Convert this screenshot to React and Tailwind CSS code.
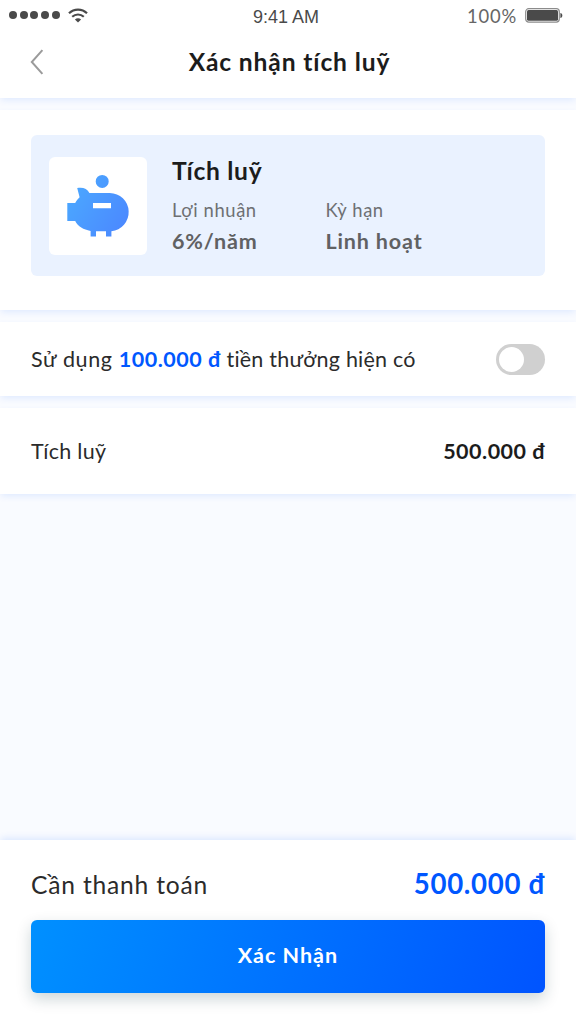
import { useState } from "react";

const details = [
  { label: "Lợi nhuận", value: "6%/năm" },
  { label: "Kỳ hạn", value: "Linh hoạt" },
];

function StatusBar() {
  return (
    <div className="flex h-8 items-center justify-between pl-[9px] pr-[13px] text-[#4a4a4a]">
      <div className="flex w-[180px] items-center gap-2 pb-0.5">
        <div className="flex gap-[2.7px]">
          {[0, 1, 2, 3, 4].map((dot) => (
            <span key={dot} className="size-2 rounded-full bg-[#4a4a4a]" />
          ))}
        </div>
        <svg width="20" height="16" viewBox="0 0 20 16" fill="none">
          <path
            d="M1 6.2C6 1.3 14 1.3 19 6.2"
            stroke="currentColor"
            strokeWidth="2.2"
          />
          <path
            d="M4.2 9.8C7.5 6.7 12.5 6.7 15.8 9.8"
            stroke="currentColor"
            strokeWidth="2.2"
          />
          <path
            d="M6.9 12.6C8.7 10.9 11.3 10.9 13.1 12.6L10 15.6Z"
            fill="currentColor"
          />
        </svg>
      </div>
      <span className="pt-0.5 font-['Liberation_Sans',sans-serif] text-[18px]">
        9:41 AM
      </span>
      <div className="flex w-[180px] items-center justify-end gap-2">
        <span className="pt-0.5 text-[18.4px] tracking-[0.8px] text-[#666]">
          100%
        </span>
        <svg width="38" height="15" viewBox="0 0 38 15">
          <rect
            x="0.7"
            y="0.7"
            width="33.6"
            height="13.4"
            rx="3"
            fill="#fff"
            stroke="#8c8c8c"
            strokeWidth="1.2"
          />
          <rect x="2" y="2" width="31" height="10.8" rx="1.5" fill="#4a4a4a" />
          <path d="M35.4 5C38 5.4 38 9.6 35.4 10Z" fill="#4a4a4a" />
        </svg>
      </div>
    </div>
  );
}

function PiggyBank() {
  return (
    <svg width="62" height="62" viewBox="0 0 62 62" overflow="visible">
      <defs>
        <linearGradient id="piggy" x1="0" y1="0.2" x2="1" y2="0.8">
          <stop offset="0" stopColor="#4ba9ff" />
          <stop offset="1" stopColor="#4b88ff" />
        </linearGradient>
      </defs>
      <path
        fill="url(#piggy)"
        fillRule="evenodd"
        d="M35.2 -.1a6.5 6.5 0 0 1 0 13a6.5 6.5 0 0 1 0 -13ZM10.2 13.1C15.5 11.9 20.4 13.6 22.4 17.9H42.8A19.2 19.2 0 0 1 44.4 56.2V61.6H39V56.2H29V61.6H23.6V56C16.4 54.8 11 51.5 8.2 46.1H.3V28H8.2C9.5 25.5 11 23.7 12.6 22.3ZM26 28V33.3H44V28Z"
      />
    </svg>
  );
}

function Switch({ checked, onChange }) {
  return (
    <button
      role="switch"
      aria-checked={checked}
      onClick={() => onChange(!checked)}
      className={`flex h-[31px] w-[49px] items-center rounded-full px-[3px] ${
        checked ? "justify-end bg-[#0057ff]" : "justify-start bg-[#d0d0d0]"
      }`}
    >
      <span className="size-[25px] rounded-full bg-white" />
    </button>
  );
}

export default function App() {
  const [useBonus, setUseBonus] = useState(false);

  return (
    <div className="flex h-[1024px] w-[576px] flex-col overflow-hidden bg-[#f9fbff] font-['Lato','Noto_Sans',sans-serif] text-[#2b2b2b]">
      <header className="relative h-[98px] shrink-0 bg-white shadow-[0_3px_7px_-1px_rgba(0,87,255,0.11)]">
        <StatusBar />
        <div className="grid h-[60px] grid-cols-[1fr_auto_1fr] items-center pl-[30px] pr-[27px]">
          <button>
            <svg
              width="14"
              height="26"
              viewBox="0 0 14 26"
              fill="none"
              stroke="#9b9b9b"
              strokeWidth="2"
            >
              <path d="M12.4 1.2L1.8 13L12.4 24.8" />
            </svg>
          </button>
          <h1 className="text-[24.6px] font-bold tracking-[0.87px] text-[#1c1c1c]">
            Xác nhận tích luỹ
          </h1>
        </div>
      </header>

      <section className="relative mt-3 h-[200px] shrink-0 bg-white px-[31px] pt-[25px] shadow-[0_3px_7px_-1px_rgba(0,87,255,0.11)]">
        <div className="flex h-[141px] items-center rounded-md bg-[#eaf2ff] px-[18px]">
          <div className="flex size-[98px] items-center justify-center rounded-md bg-white">
            <PiggyBank />
          </div>
          <div className="ml-[25px]">
            <h2 className="text-[24.6px] leading-[34px] font-bold tracking-[0.7px] text-[#1c1c1c]">
              Tích luỹ
            </h2>
            <div className="mt-[7px] flex">
              {details.map((item) => (
                <div key={item.label} className="w-[153.5px]">
                  <p className="text-[18.4px] leading-[30px] tracking-[0.6px] text-[#6e7073]">
                    {item.label}
                  </p>
                  <p className="text-[21.5px] leading-8 font-bold tracking-[0.85px] text-[#606163]">
                    {item.value}
                  </p>
                </div>
              ))}
            </div>
          </div>
        </div>
      </section>

      <section className="relative mt-3 flex h-[74px] shrink-0 items-center justify-between bg-white px-[31px] text-[21.5px] shadow-[0_3px_7px_-1px_rgba(0,87,255,0.11)]">
        <p className="tracking-[0.22px]">
          <span className="tracking-[0.65px]">Sử dụng </span>
          <span className="font-bold tracking-[0.5px] text-[#0057ff]">
            100.000 đ
          </span>{" "}
          tiền thưởng hiện có
        </p>
        <Switch checked={useBonus} onChange={setUseBonus} />
      </section>

      <section className="relative mt-3 flex h-[86px] shrink-0 items-center justify-between bg-white px-[31px] text-[21.5px] shadow-[0_3px_7px_-1px_rgba(0,87,255,0.11)]">
        <span className="tracking-[0.3px]">Tích luỹ</span>
        <span className="font-bold tracking-[0.5px] text-[#1c1c1c]">
          500.000 đ
        </span>
      </section>

      <footer className="mt-auto h-[184px] shrink-0 bg-white px-[31px] pt-[22px] shadow-[0_-3px_7px_-1px_rgba(0,87,255,0.12)]">
        <div className="flex h-[46px] items-center justify-between">
          <span className="text-[24.6px] tracking-[0.8px]">Cần thanh toán</span>
          <span className="pb-0.5 text-[27.6px] font-bold tracking-[0.7px] text-[#0057ff]">
            500.000 đ
          </span>
        </div>
        <button className="mt-3 h-[73px] w-full rounded-md bg-[linear-gradient(107deg,#0090ff,#0054ff)] pb-0.5 text-[21.5px] font-bold tracking-[1px] text-white shadow-[0_6px_15px_rgba(0,50,60,0.2)]">
          Xác Nhận
        </button>
      </footer>
    </div>
  );
}
